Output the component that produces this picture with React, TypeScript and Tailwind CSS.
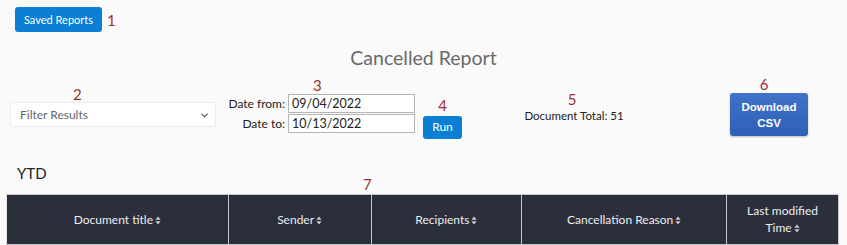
import React from 'react';
import { ChevronDown } from 'lucide-react';

const COLUMNS = [
  { label: 'Document title', width: 'w-[222px]' },
  { label: 'Sender', width: 'w-[143px]' },
  { label: 'Recipients', width: 'w-[151px]' },
  { label: 'Cancellation Reason', width: 'w-[205px]' },
  { label: 'Last modified Time', width: 'w-[112px]' },
];

const SortIcon = () => (
  <svg width="6" height="9" viewBox="0 0 6 9" className="inline-block ml-[2px] align-[-1px]">
    <path d="M3 0.5 L5.6 3.8 L0.4 3.8 Z" fill="#c9ccd3" />
    <path d="M3 8.5 L5.6 5.2 L0.4 5.2 Z" fill="#c9ccd3" />
  </svg>
);

const Marker: React.FC<{ n: number; className?: string }> = ({ n, className }) => (
  <div className={`h-4 leading-4 text-[15px] text-[#9c3030] ${className || ''}`}>{n}</div>
);

export default function App() {
  return (
    <div className="w-[847px] h-[245px] overflow-hidden bg-[#fafafa] font-['Lato','Noto_Sans',sans-serif] text-[#222]">
      {/* top bar */}
      <div className="flex items-center pt-[7px] pl-[15px]">
        <button className="h-[25px] w-[87px] rounded-[3px] bg-[#0a7fd4] text-white text-[11px] leading-none">
          Saved Reports
        </button>
        <Marker n={1} className="ml-[5px]" />
      </div>

      <h1 className="mt-[13px] h-[25px] leading-[25px] text-center text-[19.5px] text-[#6a6a6a]">
        Cancelled Report
      </h1>

      {/* controls */}
      <div className="flex items-start mt-[6px] pl-[10px]">
        <div className="w-[206px] mt-[10px]">
          <Marker n={2} className="pl-[63px]" />
          <div className="relative h-[25px] bg-white border border-[#ececec] rounded-[2px] flex items-center pl-[9px]">
            <span className="text-[12px] text-[#666]">Filter Results</span>
            <ChevronDown size={11} strokeWidth={2.5} className="absolute right-[5px] top-[7px] text-[#555]" />
          </div>
        </div>

        <div className="ml-[10px] mt-[1px]">
          <Marker n={3} className="pl-[87px] mb-[1px]" />
          <div className="grid grid-cols-[59px_127px] gap-x-[3px] gap-y-[1px] items-center">
            <label className="text-right text-[12px] leading-none">Date from:</label>
            <input
              className="h-[19px] w-[127px] bg-white border border-[#b5b5b5] px-[3px] text-[12.5px] outline-none"
              defaultValue="09/04/2022"
            />
            <label className="text-right text-[12px] leading-none">Date to:</label>
            <input
              className="h-[19px] w-[127px] bg-white border border-[#b5b5b5] px-[3px] text-[12.5px] outline-none"
              defaultValue="10/13/2022"
            />
          </div>
        </div>

        <div className="ml-[8px] mt-[21px] w-[39px]">
          <Marker n={4} className="text-center" />
          <button className="h-[23px] w-[39px] rounded-[3px] bg-[#0a7fd4] text-white text-[12px] leading-none">
            Run
          </button>
        </div>

        <div className="ml-[57px] mt-[15px] w-[110px] text-center">
          <Marker n={5} className="pr-[4px]" />
          <div className="mt-[2px] text-[11.5px] leading-[13px] whitespace-nowrap">Document Total: 51</div>
        </div>

        <div className="ml-[101px] mt-[0px] w-[78px]">
          <Marker n={6} className="text-center pr-[10px] mb-[1px]" />
          <button className="h-[43px] w-[78px] rounded-[3px] bg-gradient-to-b from-[#3f72c8] to-[#2f5fb6] shadow-[0_1px_2px_rgba(0,0,0,0.25)] text-white font-['Liberation_Sans',Arial,sans-serif] font-bold text-[11.5px] leading-[16px]">
            Download
            <br />
            CSV
          </button>
        </div>
      </div>

      <div className="mt-[24px] pl-[17px] text-[15px] leading-[20px]">YTD</div>

      {/* table */}
      <div className="relative ml-[6px] mt-[11px] w-[833px]">
        <Marker n={7} className="absolute -top-[18px] left-[357px]" />
        <table className="border-collapse w-[833px]">
          <thead>
            <tr className="bg-[#2b2f3b] h-[50px]">
              {COLUMNS.map((col, i) => (
                <th
                  key={col.label}
                  className={`${col.width} border border-[#c8c8c8] px-2 text-center text-[12px] font-normal leading-[17px] text-[#eceef2] ${i === 0 ? 'border-l-[#e0e0e0]' : ''}`}
                >
                  {col.label}
                  <SortIcon />
                </th>
              ))}
            </tr>
          </thead>
        </table>
      </div>
    </div>
  );
}
